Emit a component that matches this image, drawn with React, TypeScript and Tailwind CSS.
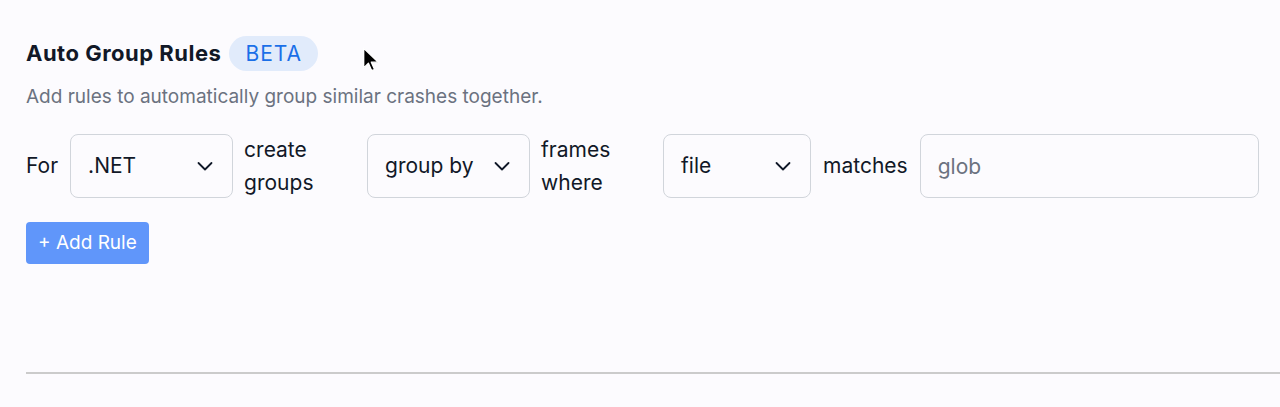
import React from 'react'

const font = { fontFamily: 'Inter, "Noto Sans", sans-serif' }

function Chevron() {
  return (
    <svg width="20" height="20" viewBox="0 0 20 20" fill="none" className="text-gray-900">
      <path d="M3.5 7l6.5 6.5L16.5 7" stroke="currentColor" strokeWidth="1.8" strokeLinecap="round" strokeLinejoin="round" />
    </svg>
  )
}

function Select({ value, width }: { value: string; width: string }) {
  return (
    <div className={`flex h-16 shrink-0 items-center justify-between rounded-lg border border-[#d1d5db] pl-[17px] pr-[17px] ${width}`}>
      <span>{value}</span>
      <Chevron />
    </div>
  )
}

// mouse pointer captured in the screenshot
function Cursor() {
  return (
    <svg width="18" height="28" viewBox="0 0 16 24" className="absolute left-[362px] top-[46px]">
      <path d="M1.5 1.5v17.5l4.2-4.1 2.9 6.6 2.6-1.1-2.9-6.5h6z" fill="#000" stroke="#fff" strokeWidth="1.2" strokeLinejoin="round" />
    </svg>
  )
}

export default function App() {
  return (
    <div className="relative min-h-screen bg-[#fcfbfe] text-[#111827]" style={font}>
      <Cursor />
      <div className="pl-[26px] pt-[36px]">
        <div className="flex items-center gap-[8px]">
          <h2 className="text-[22px] font-bold tracking-[0.5px]">Auto Group Rules</h2>
          <span className="flex h-[35px] items-center rounded-full bg-[#e1ebfb] px-[16px] text-[21px] tracking-[1px] text-[#1a6fe8]">BETA</span>
        </div>
        <p className="mt-[12px] text-[19px] leading-[28px] text-[#6b7280]">Add rules to automatically group similar crashes together.</p>

        <div className="mt-[22px] flex items-center pr-[21px] text-[21px]">
          <span className="mr-[12px]">For</span>
          <Select value=".NET" width="w-[163px]" />
          <span className="ml-[11px] w-[123px] leading-[33px]">create groups</span>
          <Select value="group by" width="w-[163px]" />
          <span className="ml-[11px] w-[122px] leading-[33px]">frames where</span>
          <Select value="file" width="w-[148px]" />
          <span className="ml-[12px] mr-[12px]">matches</span>
          <input
            placeholder="glob"
            className="h-16 min-w-0 flex-1 rounded-lg border border-[#d1d5db] bg-transparent px-[17px] text-[21px] outline-none placeholder:text-[#6b7280]"
          />
        </div>

        <button className="mt-[23px] h-[42px] rounded-[4px] bg-[#6096fa] px-[12px] text-[19px] text-white">+ Add Rule</button>

        <div className="mt-[108px] border-t-2 border-[#cbcbcb]" />
      </div>
    </div>
  )
}
